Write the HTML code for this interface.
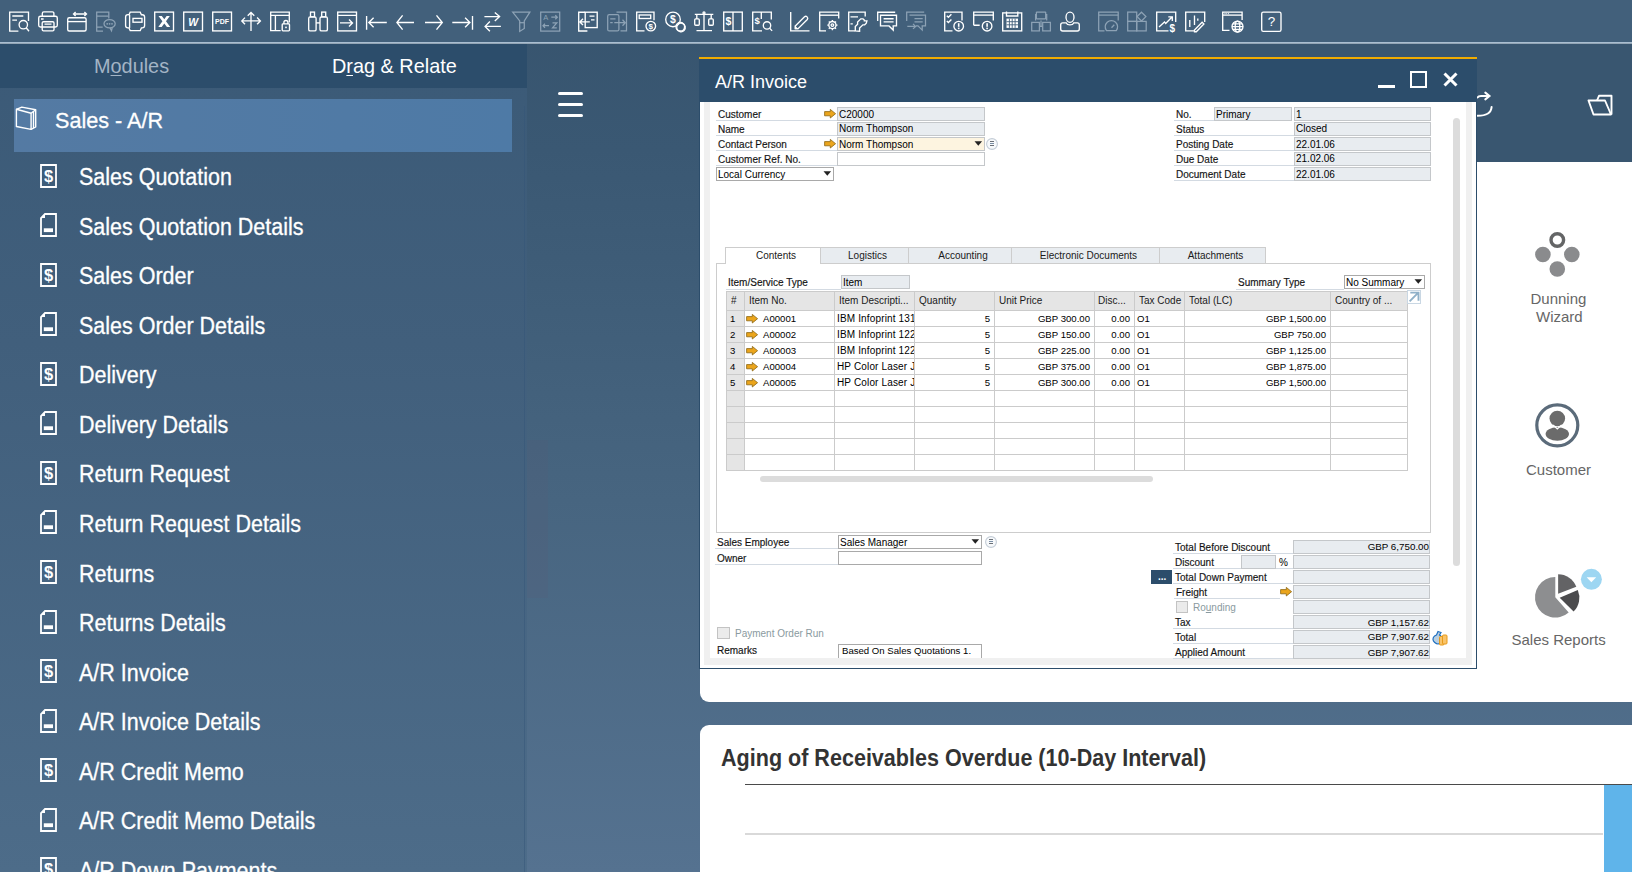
<!DOCTYPE html>
<html><head><meta charset="utf-8"><style>
html,body{margin:0;padding:0;width:1632px;height:872px;overflow:hidden;background:#3a5873}
body{position:relative;font-family:"Liberation Sans", sans-serif}
.a{position:absolute}
svg{overflow:visible}
.t{position:absolute;white-space:nowrap}
.lb{-webkit-text-stroke:0.15px #000}
.lp{-webkit-text-stroke:0.35px #fff}
</style></head><body>
<div class="a" style="left:0px;top:0px;width:1632px;height:872px;background:linear-gradient(to bottom,#37546e 0px,#3a5873 150px,#476580 500px,#557290 872px)"></div><div class="a" style="left:0px;top:0px;width:1632px;height:42px;background:#42607b"></div><div class="a" style="left:0px;top:42px;width:1632px;height:2px;background:linear-gradient(to bottom,#a9bed1 0,#a9bed1 50%,#7d8c99 100%)"></div><svg class="a" style="left:9px;top:12px;" width="21" height="21" viewBox="0 0.6 21 21"><g stroke="#fff" fill="none" stroke-width="1.35"><path d="M19.5 9.5V0.7H0.7v19h8.7"/><path d="M3.3 4.6h11M3.3 8.7h4.7"/><circle cx="14.3" cy="13.3" r="4.2"/><path d="M17.2 16.4l2.8 3.4"/></g></svg><svg class="a" style="left:38px;top:12px;" width="21" height="21" viewBox="0 0.6 21 21"><g stroke="#fff" fill="none" stroke-width="1.35"><path d="M4.3 4.8V2a1.5 1.5 0 0 1 1.5-1.5h8.6A1.5 1.5 0 0 1 15.9 2v2.8"/><rect x="0.7" y="4.8" width="18.6" height="10.8" rx="1.8"/><rect x="4.2" y="10.3" width="11.8" height="9.2" rx="1.3"/><path d="M3 7.6h2.6M6.5 12.7h7"/></g></svg><svg class="a" style="left:67px;top:12px;" width="21" height="21" viewBox="0 0.6 21 21"><g stroke="#fff" fill="none" stroke-width="1.35"><path d="M6.5 2.6h13M8.6 0.5L6.5 2.6l2.1 2.1M17.4 0.5l2.1 2.1-2.1 2.1"/><rect x="0.7" y="6.3" width="18.4" height="13.3" rx="1.5"/><path d="M0.7 10.2h18.4"/></g></svg><svg class="a" style="left:96px;top:12px;" width="21" height="21" viewBox="0 0.6 21 21"><g stroke="#8da2b5" fill="none" stroke-width="1.25"><path d="M12.8 7V0.7H0.7v19H7"/><path d="M0.7 4.6h12M0.7 15.7h6"/><ellipse cx="13.6" cy="12.4" rx="5.6" ry="4.2"/><path d="M14 16.5l1.5 2.8 0.8-3.3"/></g><g fill="#8da2b5"><circle cx="11.2" cy="12.4" r="0.9"/><circle cx="13.6" cy="12.4" r="0.9"/><circle cx="16" cy="12.4" r="0.9"/></g></svg><svg class="a" style="left:125px;top:12px;" width="21" height="21" viewBox="0 0.6 21 21"><g stroke="#fff" fill="none" stroke-width="1.35"><path d="M4 3.3L5.2 0.7h10L16.4 3.3H17.3a2.3 2.3 0 0 1 2.3 2.3v8.6a2.3 2.3 0 0 1-2.3 2.3H16.4L15.2 19.3h-10L4 16.5H2.9A2.3 2.3 0 0 1 0.6 14.2V5.6A2.3 2.3 0 0 1 2.9 3.3z"/><path d="M4.6 3.3v13.2"/><rect x="8" y="7" width="9" height="3.8"/></g></svg><svg class="a" style="left:154px;top:12px;" width="21" height="21" viewBox="0 0.6 21 21"><g stroke="#fff" fill="none" stroke-width="1.35"><rect x="0.7" y="0.7" width="18.8" height="18.8"/></g><path d="M4.5 4.5h3.3l2.5 3.4 2.3-3.4h3.2l-3.8 5.3 4.2 5.8h-3.3l-2.6-3.6-2.6 3.6H4.3l4.1-5.8z" fill="#fff"/></svg><svg class="a" style="left:183px;top:12px;" width="21" height="21" viewBox="0 0.6 21 21"><g stroke="#fff" fill="none" stroke-width="1.35"><rect x="0.7" y="0.7" width="18.8" height="18.8"/></g><text x="10.3" y="14.3" text-anchor="middle" font-family="Liberation Sans" font-weight="bold" font-style="italic" font-size="10.5" fill="#fff">W</text></svg><svg class="a" style="left:212px;top:12px;" width="21" height="21" viewBox="0 0.6 21 21"><g stroke="#fff" fill="none" stroke-width="1.35"><rect x="0.7" y="0.7" width="18.8" height="18.8"/></g><text x="10.1" y="13" text-anchor="middle" font-family="Liberation Sans" font-weight="bold" font-style="normal" font-size="7" fill="#fff">PDF</text></svg><svg class="a" style="left:241px;top:12px;" width="21" height="21" viewBox="0 0.6 21 21"><g stroke="#fff" fill="none" stroke-width="1.35"><path d="M10 1.2v18.5M0.8 9.5h18.6M6.7 4.3L10 1l3.3 3.3M4 6.2L0.8 9.5 4 12.8M16.1 6.2l3.3 3.3-3.3 3.3"/></g></svg><svg class="a" style="left:270px;top:12px;" width="21" height="21" viewBox="0 0.6 21 21"><g stroke="#fff" fill="none" stroke-width="1.35"><path d="M10.7 19.3H0.7V0.7h18.6V11"/><path d="M0.7 4h18.6M5.4 4v15.3"/><rect x="12.2" y="12.5" width="7.3" height="7" rx="0.8"/><path d="M13.9 12.5v-1.4a2 2 0 0 1 4 0v1.4"/></g><rect x="15.2" y="15.2" width="1.6" height="1.6" fill="#fff"/></svg><svg class="a" style="left:308px;top:12px;" width="21" height="21" viewBox="0 0.6 21 21"><g stroke="#fff" fill="none" stroke-width="1.35"><rect x="0.7" y="5.5" width="7.4" height="14" rx="1.5"/><rect x="12" y="5.5" width="7.4" height="14" rx="1.5"/><rect x="2.5" y="0.7" width="4" height="4.8"/><rect x="13.7" y="0.7" width="4" height="4.8"/><path d="M8.1 11.5h3.9"/></g></svg><svg class="a" style="left:337px;top:12px;" width="21" height="21" viewBox="0 0.6 21 21"><g stroke="#fff" fill="none" stroke-width="1.35"><rect x="0.7" y="0.7" width="18.8" height="18.8"/><path d="M0.7 4h18.8M3 11.5h12.5M12 8l3.5 3.5-3.5 3.5"/></g></svg><svg class="a" style="left:366px;top:12px;" width="21" height="21" viewBox="0 0.6 21 21"><g stroke="#fff" fill="none" stroke-width="1.35"><path d="M0.6 4.7v13.6M20.8 11.1H2.8M7.6 6.4L2.8 11.1l4.8 4.7"/></g></svg><svg class="a" style="left:396px;top:12px;" width="21" height="21" viewBox="0 0.6 21 21"><g stroke="#fff" fill="none" stroke-width="1.35"><path d="M18 11.1H0.9M6.6 4L0.9 11.1l5.7 7.1"/></g></svg><svg class="a" style="left:425px;top:12px;" width="21" height="21" viewBox="0 0.6 21 21"><g stroke="#fff" fill="none" stroke-width="1.35"><path d="M0 11.1h17.3M11.5 4l5.8 7.1-5.8 7.1"/></g></svg><svg class="a" style="left:453px;top:12px;" width="21" height="21" viewBox="0 0.6 21 21"><g stroke="#fff" fill="none" stroke-width="1.35"><path d="M-0.7 11.1h17.5M12.1 6.4l4.8 4.7-4.8 4.7M19.5 4.7v13.6"/></g></svg><svg class="a" style="left:483px;top:12px;" width="21" height="21" viewBox="0 0.6 21 21"><g stroke="#fff" fill="none" stroke-width="1.35"><path d="M1.4 5.2h15.2M11.8 1l4.8 4.2-4.8 4.3M17.9 15H2.1M6.9 10.1L2.1 15l4.8 4.9"/></g></svg><svg class="a" style="left:512px;top:12px;" width="21" height="21" viewBox="0 0.6 21 21"><g stroke="#8da2b5" fill="none" stroke-width="1.25"><path d="M0.7 0.7h17.2l-5.6 8.8v7.5l-4.6 3v-10.5z"/><path d="M7.7 11.3h4.6"/></g></svg><svg class="a" style="left:540px;top:12px;" width="21" height="21" viewBox="0 0.6 21 21"><g stroke="#8da2b5" fill="none" stroke-width="1.25"><rect x="0.7" y="0.7" width="19" height="19"/><path d="M11.3 5.8h6M15.3 3.8l2 2-2 2M3 14.3h6M5 12.3l-2 2 2 2M12.5 11.5h4.3l-4.3 5h4.3"/></g><text x="5.8" y="9" text-anchor="middle" font-family="Liberation Sans" font-weight="normal" font-style="normal" font-size="7.5" fill="#8da2b5">A</text></svg><svg class="a" style="left:578px;top:12px;" width="21" height="21" viewBox="0 0.6 21 21"><g stroke="#fff" fill="none" stroke-width="1.35"><path d="M7 0.8H0.7v18.8h8.7"/><rect x="7.2" y="0.8" width="12" height="15.4"/><path d="M11.5 4.7h5M13 8.5h3.5M1.8 10.5h10M5 7.3l-3.2 3.2 3.2 3.2"/></g></svg><svg class="a" style="left:607px;top:12px;" width="21" height="21" viewBox="0 0.6 21 21"><g stroke="#8da2b5" fill="none" stroke-width="1.25"><path d="M9.5 0.8h10v18.8h-6"/><rect x="0.7" y="3.3" width="11.2" height="16.3" rx="1.5"/><path d="M3.2 7.5h5.3M3.2 11.3h2.5M7.3 11.3h11M15.5 8.3l2.8 3-2.8 3"/></g></svg><svg class="a" style="left:636px;top:12px;" width="21" height="21" viewBox="0 0.6 21 21"><g stroke="#fff" fill="none" stroke-width="1.35"><path d="M8.5 19.5H0.7V0.7h17.3v8.2"/><rect x="3.2" y="3.6" width="11.5" height="3.5"/><circle cx="14.8" cy="14.7" r="4.8"/></g><text x="14.8" y="17.8" text-anchor="middle" font-family="Liberation Sans" font-weight="bold" font-style="normal" font-size="8" fill="#fff">$</text></svg><svg class="a" style="left:665px;top:12px;" width="21" height="21" viewBox="0 0.6 21 21"><g stroke="#fff" fill="none" stroke-width="1.35"><circle cx="8" cy="8" r="7.3"/><path d="M12.8 13.2a4.3 4.3 0 1 0 0.3-0.3"/><circle cx="15.3" cy="15.3" r="4.3"/></g><text x="8" y="11.8" text-anchor="middle" font-family="Liberation Sans" font-weight="bold" font-style="normal" font-size="10.5" fill="#fff">$</text></svg><svg class="a" style="left:694px;top:12px;" width="21" height="21" viewBox="0 0.6 21 21"><g stroke="#fff" fill="none" stroke-width="1.35"><path d="M10 2.5v16.5M2.5 19.2h15.5M0.8 3h18.5M2.8 3v4.5M17.2 3v4.5"/><rect x="0.7" y="7.5" width="4.6" height="6.3" rx="1"/><rect x="14.7" y="7.5" width="4.6" height="6.3" rx="1"/><circle cx="10" cy="1.5" r="1"/></g></svg><svg class="a" style="left:723px;top:12px;" width="21" height="21" viewBox="0 0.6 21 21"><g stroke="#fff" fill="none" stroke-width="1.35"><rect x="0.7" y="0.7" width="18.6" height="18.8"/><path d="M10 0.7v18.8"/></g><text x="5.5" y="14" text-anchor="middle" font-family="Liberation Sans" font-weight="bold" font-style="normal" font-size="10.5" fill="#fff">$</text></svg><svg class="a" style="left:752px;top:12px;" width="21" height="21" viewBox="0 0.6 21 21"><g stroke="#fff" fill="none" stroke-width="1.35"><path d="M10 19.5H0.7V0.7h18.6V8M9.3 0.7v7"/><circle cx="15" cy="14" r="3.7"/><path d="M17.6 16.7l2.5 2.8"/></g><text x="5.2" y="13" text-anchor="middle" font-family="Liberation Sans" font-weight="bold" font-style="normal" font-size="9.5" fill="#fff">$</text></svg><svg class="a" style="left:790px;top:12px;" width="21" height="21" viewBox="0 0.6 21 21"><g stroke="#fff" fill="none" stroke-width="1.35"><path d="M0.7 0.5v19h18.8"/><path d="M5.3 14.5L14.5 5.3a2 2 0 0 1 2.8 2.8L8.1 17.3H5.3z"/></g><path d="M4.8 14l3.8 3.8H4.8z" fill="#fff"/></svg><svg class="a" style="left:819px;top:12px;" width="21" height="21" viewBox="0 0.6 21 21"><g stroke="#fff" fill="none" stroke-width="1.35"><path d="M7 19.5H0.7V0.7h19V7"/><path d="M0.7 3.8h19"/><circle cx="13.4" cy="13.7" r="3.6"/><circle cx="13.4" cy="13.7" r="1.3"/><path d="M13.4 8.6v1.5M13.4 17.3v1.5M8.3 13.7h1.5M17 13.7h1.5M9.8 10.1l1 1M16 16.3l1 1M17 10.1l-1 1M10.8 16.3l-1 1"/></g></svg><svg class="a" style="left:848px;top:12px;" width="21" height="21" viewBox="0 0.6 21 21"><g stroke="#fff" fill="none" stroke-width="1.35"><path d="M7 19.5H0.7V0.7h16.5V5"/><path d="M2.5 5.5h7.5M2.5 12.5h2.3"/><path d="M7.3 19.5v-4.3l2.3-2.3v-2.3l3.2-3.2h2.2l1.3 1.3v0.8h2.6l-0.6 2.3-1.6 1.6h-1.8l-3.3 3.3v3.1z"/></g></svg><svg class="a" style="left:877px;top:12px;" width="21" height="21" viewBox="0 0.6 21 21"><g stroke="#fff" fill="none" stroke-width="1.35"><path d="M0.7 9.5V0.8h17.5"/><path d="M3.5 3.8h16v10.7h-3.3v4.2l-4.2-4.2H3.5z"/><path d="M6.6 7.3h10M6.6 10.4h10"/></g></svg><svg class="a" style="left:906px;top:12px;" width="21" height="21" viewBox="0 0.6 21 21"><g stroke="#8da2b5" fill="none" stroke-width="1.25"><path d="M0.7 9.5V0.8h17.5"/><path d="M3.5 3.8h16v10.7h-3.3v4.2l-4.2-4.2H10"/><path d="M8.5 7.3h8.2M8.5 10.4h8.2M1.3 15h8.3M7 12.5l2.6 2.5L7 17.5"/></g></svg><svg class="a" style="left:944px;top:12px;" width="21" height="21" viewBox="0 0.6 21 21"><g stroke="#fff" fill="none" stroke-width="1.35"><path d="M8.5 19.5H0.7V0.7h17.3v8.3"/><path d="M2.8 4.3l1.6 1.6 3-3M2.8 9.6l1.6 1.6 3-3"/><circle cx="14.7" cy="14.8" r="4.8"/></g><rect x="13.9" y="11.8" width="1.6" height="3.6" fill="#fff"/><rect x="13.9" y="16.2" width="1.6" height="1.6" fill="#fff"/></svg><svg class="a" style="left:973px;top:12px;" width="21" height="21" viewBox="0 0.6 21 21"><g stroke="#fff" fill="none" stroke-width="1.35"><path d="M0.7 13.8V0.7h19.6v8.5M0.7 13.8h6"/><path d="M0.7 3.7h19.6"/><circle cx="14.1" cy="14.8" r="4.8"/></g><rect x="13.3" y="11.8" width="1.6" height="3.6" fill="#fff"/><rect x="13.3" y="16.2" width="1.6" height="1.6" fill="#fff"/></svg><svg class="a" style="left:1002px;top:12px;" width="21" height="21" viewBox="0 0.6 21 21"><g stroke="#fff" fill="none" stroke-width="1.35"><rect x="0.7" y="1.5" width="19" height="18"/><path d="M4.5 0v4.6h11.3V0"/></g><rect x="4.5" y="7.2" width="11.5" height="9.3" fill="#fff"/><g stroke="#42607b" stroke-width="0.9"><path d="M7.4 7.2v9.3M10.2 7.2v9.3M13.1 7.2v9.3M4.5 10.3h11.5M4.5 13.4h11.5"/></g></svg><svg class="a" style="left:1031px;top:12px;" width="21" height="21" viewBox="0 0.6 21 21"><g stroke="#8da2b5" fill="none" stroke-width="1.25"><rect x="5.4" y="0.7" width="9.3" height="6.7" rx="0.5"/><path d="M4.6 9V3.2h0.8M14.7 3.2h1V9"/><rect x="0.7" y="11" width="7.7" height="8.5"/><rect x="11.7" y="11" width="7.7" height="8.5"/><path d="M8.4 15h3.3M10 9v6"/></g></svg><svg class="a" style="left:1060px;top:12px;" width="21" height="21" viewBox="0 0.6 21 21"><g stroke="#fff" fill="none" stroke-width="1.35"><ellipse cx="10" cy="5.8" rx="4" ry="5.1"/><path d="M6.3 11.5H2.7a2 2 0 0 0-2 2v4.1a2 2 0 0 0 2 2h14.6a2 2 0 0 0 2-2v-4.1a2 2 0 0 0-2-2h-3.6c-1 2.6-6.4 2.6-7.4 0z"/></g></svg><svg class="a" style="left:1098px;top:12px;" width="21" height="21" viewBox="0 0.6 21 21"><g stroke="#8da2b5" fill="none" stroke-width="1.25"><path d="M6.5 19.5H0.7V0.7h19.5v8.5"/><path d="M0.7 3.7h19.5"/><path d="M8.5 19.2a6.2 6.2 0 1 1 9.8 0z"/><path d="M13.5 16.3l2.8-3"/></g></svg><svg class="a" style="left:1127px;top:12px;" width="21" height="21" viewBox="0 0.6 21 21"><g stroke="#8da2b5" fill="none" stroke-width="1.25"><rect x="0.7" y="0.7" width="9" height="9.3"/><rect x="0.7" y="10" width="9" height="9.5"/><rect x="9.7" y="10" width="9.5" height="9.5"/><path d="M14.5 0.8l4.4 4.4-4.4 4.4-4.4-4.4z"/></g></svg><svg class="a" style="left:1156px;top:12px;" width="21" height="21" viewBox="0 0.6 21 21"><g stroke="#fff" fill="none" stroke-width="1.35"><path d="M12.5 19.5H0.7V0.7h19v10"/><path d="M3 15.5l5.5-5 1.2 1.5 5.8-5.8M12.3 5.5h4v4"/></g><text x="16.2" y="20.2" text-anchor="middle" font-family="Liberation Sans" font-weight="bold" font-style="normal" font-size="10" fill="#fff">$</text></svg><svg class="a" style="left:1185px;top:12px;" width="21" height="21" viewBox="0 0.6 21 21"><g stroke="#fff" fill="none" stroke-width="1.35"><path d="M9.5 19.5H0.7V0.7h19V10.5"/><path d="M4.8 15.5V8.5M9.5 13.5V4M12.8 9.3V7"/><path d="M9.5 18.5l7.6-7.6 1.8 1.8-7.6 7.6H9.5z"/></g></svg><svg class="a" style="left:1222px;top:12px;" width="21" height="21" viewBox="0 0.6 21 21"><g stroke="#fff" fill="none" stroke-width="1.35"><path d="M7.5 19H0.7V0.7h19.4v8"/><path d="M0.7 3.7h19.4"/><circle cx="15.5" cy="15.2" r="5.5"/><ellipse cx="15.5" cy="15.2" rx="2.3" ry="5.5"/><path d="M10 15.2h11M10.8 12.5h9.4M10.8 17.9h9.4"/></g><g fill="#fff"><circle cx="3" cy="2.2" r="0.55"/><circle cx="4.8" cy="2.2" r="0.55"/><circle cx="6.6" cy="2.2" r="0.55"/></g></svg><svg class="a" style="left:1261px;top:12px;" width="21" height="21" viewBox="0 0.6 21 21"><g stroke="#fff" fill="none" stroke-width="1.35"><rect x="0.7" y="0.7" width="19.3" height="19.3" rx="1.6"/></g><text x="10.4" y="15" text-anchor="middle" font-family="Liberation Sans" font-weight="normal" font-style="normal" font-size="13.5" fill="#fff">?</text></svg><div class="a" style="left:0px;top:44px;width:527px;height:828px;background:linear-gradient(to bottom,#3b5a77 0,#415f7c 300px,#4d6c89 828px)"></div><div class="a" style="left:0px;top:44px;width:527px;height:44px;background:#2c4d6b"></div><div class="t" style="left:94px;top:56px;font-size:20.8px;line-height:20.8px;color:#a3b4c5;font-weight:normal;transform:scaleX(0.955);transform-origin:0 0;">M<u style="text-decoration-thickness:1px;text-underline-offset:2px">o</u>dules</div><div class="t" style="left:332px;top:56px;font-size:20.8px;line-height:20.8px;color:#ffffff;font-weight:normal;transform:scaleX(0.955);transform-origin:0 0;">D<u style="text-decoration-thickness:1px;text-underline-offset:2px">r</u>ag &amp; Relate</div><div class="a" style="left:14px;top:99px;width:498px;height:53px;background:linear-gradient(to right,#547aa3,#4e7aa6)"></div><svg class="a" style="left:14px;top:104px;" width="24" height="28" viewBox="0 0 24 28"><g stroke="#fff" fill="none" stroke-width="1.4" stroke-linejoin="round"><path d="M2.4 5.3L17.1 9.2V25.4L2.4 22.5Z"/><path d="M2.4 5.3L7.8 3.1L21.7 5.8V23L17.1 25.4"/><path d="M17.1 9.2L21.7 5.8"/><path d="M19.5 7.5V24"/></g></svg><div class="t" style="left:55px;top:110px;font-size:22.5px;line-height:22.5px;color:#fff;font-weight:normal;transform:scaleX(0.96);transform-origin:0 0;-webkit-text-stroke:0.3px #fff">Sales - A/R</div><svg class="a" style="left:40px;top:164px;" width="17" height="24" viewBox="0 0 17 24"><g stroke="#fff" fill="none" stroke-width="1.8"><path d="M1 1h15v22H1z"/></g><text x="8.6" y="18.2" text-anchor="middle" font-family="Liberation Sans" font-weight="bold" font-size="16.5" fill="#fff">$</text></svg><div class="t" style="left:79px;top:166px;font-size:23px;line-height:23px;color:#fff;font-weight:normal;transform:scaleX(0.934);transform-origin:0 0;-webkit-text-stroke:0.3px #fff">Sales Quotation</div><svg class="a" style="left:40px;top:213px;" width="17" height="24" viewBox="0 0 17 24"><g stroke="#fff" fill="none" stroke-width="1.8"><path d="M5 1h11v22H1V5z"/></g><path d="M1 5l4-4v4z" fill="#fff"/><rect x="3.8" y="15.3" width="9.2" height="3.8" fill="#fff"/></svg><div class="t" style="left:79px;top:216px;font-size:23px;line-height:23px;color:#fff;font-weight:normal;transform:scaleX(0.934);transform-origin:0 0;-webkit-text-stroke:0.3px #fff">Sales Quotation Details</div><svg class="a" style="left:40px;top:263px;" width="17" height="24" viewBox="0 0 17 24"><g stroke="#fff" fill="none" stroke-width="1.8"><path d="M1 1h15v22H1z"/></g><text x="8.6" y="18.2" text-anchor="middle" font-family="Liberation Sans" font-weight="bold" font-size="16.5" fill="#fff">$</text></svg><div class="t" style="left:79px;top:265px;font-size:23px;line-height:23px;color:#fff;font-weight:normal;transform:scaleX(0.934);transform-origin:0 0;-webkit-text-stroke:0.3px #fff">Sales Order</div><svg class="a" style="left:40px;top:312px;" width="17" height="24" viewBox="0 0 17 24"><g stroke="#fff" fill="none" stroke-width="1.8"><path d="M5 1h11v22H1V5z"/></g><path d="M1 5l4-4v4z" fill="#fff"/><rect x="3.8" y="15.3" width="9.2" height="3.8" fill="#fff"/></svg><div class="t" style="left:79px;top:315px;font-size:23px;line-height:23px;color:#fff;font-weight:normal;transform:scaleX(0.934);transform-origin:0 0;-webkit-text-stroke:0.3px #fff">Sales Order Details</div><svg class="a" style="left:40px;top:362px;" width="17" height="24" viewBox="0 0 17 24"><g stroke="#fff" fill="none" stroke-width="1.8"><path d="M1 1h15v22H1z"/></g><text x="8.6" y="18.2" text-anchor="middle" font-family="Liberation Sans" font-weight="bold" font-size="16.5" fill="#fff">$</text></svg><div class="t" style="left:79px;top:364px;font-size:23px;line-height:23px;color:#fff;font-weight:normal;transform:scaleX(0.934);transform-origin:0 0;-webkit-text-stroke:0.3px #fff">Delivery</div><svg class="a" style="left:40px;top:411px;" width="17" height="24" viewBox="0 0 17 24"><g stroke="#fff" fill="none" stroke-width="1.8"><path d="M5 1h11v22H1V5z"/></g><path d="M1 5l4-4v4z" fill="#fff"/><rect x="3.8" y="15.3" width="9.2" height="3.8" fill="#fff"/></svg><div class="t" style="left:79px;top:414px;font-size:23px;line-height:23px;color:#fff;font-weight:normal;transform:scaleX(0.934);transform-origin:0 0;-webkit-text-stroke:0.3px #fff">Delivery Details</div><svg class="a" style="left:40px;top:461px;" width="17" height="24" viewBox="0 0 17 24"><g stroke="#fff" fill="none" stroke-width="1.8"><path d="M1 1h15v22H1z"/></g><text x="8.6" y="18.2" text-anchor="middle" font-family="Liberation Sans" font-weight="bold" font-size="16.5" fill="#fff">$</text></svg><div class="t" style="left:79px;top:463px;font-size:23px;line-height:23px;color:#fff;font-weight:normal;transform:scaleX(0.934);transform-origin:0 0;-webkit-text-stroke:0.3px #fff">Return Request</div><svg class="a" style="left:40px;top:510px;" width="17" height="24" viewBox="0 0 17 24"><g stroke="#fff" fill="none" stroke-width="1.8"><path d="M5 1h11v22H1V5z"/></g><path d="M1 5l4-4v4z" fill="#fff"/><rect x="3.8" y="15.3" width="9.2" height="3.8" fill="#fff"/></svg><div class="t" style="left:79px;top:513px;font-size:23px;line-height:23px;color:#fff;font-weight:normal;transform:scaleX(0.934);transform-origin:0 0;-webkit-text-stroke:0.3px #fff">Return Request Details</div><svg class="a" style="left:40px;top:560px;" width="17" height="24" viewBox="0 0 17 24"><g stroke="#fff" fill="none" stroke-width="1.8"><path d="M1 1h15v22H1z"/></g><text x="8.6" y="18.2" text-anchor="middle" font-family="Liberation Sans" font-weight="bold" font-size="16.5" fill="#fff">$</text></svg><div class="t" style="left:79px;top:563px;font-size:23px;line-height:23px;color:#fff;font-weight:normal;transform:scaleX(0.934);transform-origin:0 0;-webkit-text-stroke:0.3px #fff">Returns</div><svg class="a" style="left:40px;top:610px;" width="17" height="24" viewBox="0 0 17 24"><g stroke="#fff" fill="none" stroke-width="1.8"><path d="M5 1h11v22H1V5z"/></g><path d="M1 5l4-4v4z" fill="#fff"/><rect x="3.8" y="15.3" width="9.2" height="3.8" fill="#fff"/></svg><div class="t" style="left:79px;top:612px;font-size:23px;line-height:23px;color:#fff;font-weight:normal;transform:scaleX(0.934);transform-origin:0 0;-webkit-text-stroke:0.3px #fff">Returns Details</div><svg class="a" style="left:40px;top:659px;" width="17" height="24" viewBox="0 0 17 24"><g stroke="#fff" fill="none" stroke-width="1.8"><path d="M1 1h15v22H1z"/></g><text x="8.6" y="18.2" text-anchor="middle" font-family="Liberation Sans" font-weight="bold" font-size="16.5" fill="#fff">$</text></svg><div class="t" style="left:79px;top:662px;font-size:23px;line-height:23px;color:#fff;font-weight:normal;transform:scaleX(0.934);transform-origin:0 0;-webkit-text-stroke:0.3px #fff">A/R Invoice</div><svg class="a" style="left:40px;top:709px;" width="17" height="24" viewBox="0 0 17 24"><g stroke="#fff" fill="none" stroke-width="1.8"><path d="M5 1h11v22H1V5z"/></g><path d="M1 5l4-4v4z" fill="#fff"/><rect x="3.8" y="15.3" width="9.2" height="3.8" fill="#fff"/></svg><div class="t" style="left:79px;top:711px;font-size:23px;line-height:23px;color:#fff;font-weight:normal;transform:scaleX(0.934);transform-origin:0 0;-webkit-text-stroke:0.3px #fff">A/R Invoice Details</div><svg class="a" style="left:40px;top:758px;" width="17" height="24" viewBox="0 0 17 24"><g stroke="#fff" fill="none" stroke-width="1.8"><path d="M1 1h15v22H1z"/></g><text x="8.6" y="18.2" text-anchor="middle" font-family="Liberation Sans" font-weight="bold" font-size="16.5" fill="#fff">$</text></svg><div class="t" style="left:79px;top:761px;font-size:23px;line-height:23px;color:#fff;font-weight:normal;transform:scaleX(0.934);transform-origin:0 0;-webkit-text-stroke:0.3px #fff">A/R Credit Memo</div><svg class="a" style="left:40px;top:808px;" width="17" height="24" viewBox="0 0 17 24"><g stroke="#fff" fill="none" stroke-width="1.8"><path d="M5 1h11v22H1V5z"/></g><path d="M1 5l4-4v4z" fill="#fff"/><rect x="3.8" y="15.3" width="9.2" height="3.8" fill="#fff"/></svg><div class="t" style="left:79px;top:810px;font-size:23px;line-height:23px;color:#fff;font-weight:normal;transform:scaleX(0.934);transform-origin:0 0;-webkit-text-stroke:0.3px #fff">A/R Credit Memo Details</div><svg class="a" style="left:40px;top:857px;" width="17" height="24" viewBox="0 0 17 24"><g stroke="#fff" fill="none" stroke-width="1.8"><path d="M1 1h15v22H1z"/></g><text x="8.6" y="18.2" text-anchor="middle" font-family="Liberation Sans" font-weight="bold" font-size="16.5" fill="#fff">$</text></svg><div class="t" style="left:79px;top:860px;font-size:23px;line-height:23px;color:#fff;font-weight:normal;transform:scaleX(0.934);transform-origin:0 0;-webkit-text-stroke:0.3px #fff">A/R Down Payments</div><div class="a" style="left:524px;top:106px;width:1px;height:766px;background:rgba(50,85,120,0.45)"></div><div class="a" style="left:558px;top:92px;width:25px;height:3px;background:#fff;border-radius:1.5px"></div><div class="a" style="left:558px;top:103px;width:25px;height:3px;background:#fff;border-radius:1.5px"></div><div class="a" style="left:558px;top:114px;width:25px;height:3px;background:#fff;border-radius:1.5px"></div><div class="a" style="left:527px;top:440px;width:21px;height:158px;background:rgba(95,85,115,0.15)"></div><div class="a" style="left:700px;top:44px;width:932px;height:118px;background:#395670;border-bottom:1px solid #2f4b64"></div><div class="a" style="left:700px;top:162px;width:932px;height:540px;background:#fff;border-radius:0 0 0 9px"></div><div class="a" style="left:700px;top:725px;width:932px;height:147px;background:#fff;border-radius:9px 0 0 0"></div><div class="t" style="left:721px;top:747px;font-size:23px;line-height:23px;color:#333;font-weight:bold;transform:scaleX(0.937);transform-origin:0 0;">Aging of Receivables Overdue (10-Day Interval)</div><div class="a" style="left:745px;top:784px;width:887px;height:1px;background:#4a4a4a"></div><div class="a" style="left:745px;top:833px;width:858px;height:2px;background:#d9d9d9"></div><div class="a" style="left:1604px;top:785px;width:28px;height:87px;background:#5fb4ea"></div><svg class="a" style="left:1470px;top:88px;" width="26" height="32" viewBox="0 0 26 32"><g stroke="#fff" fill="none" stroke-width="2" stroke-linecap="round"><path d="M7.5 9.5Q8.5 8 11 8H19.5M15.3 4.6L19.5 8L15.3 11.4"/><path d="M21.6 19Q21 27.8 7.5 27.8"/></g></svg><svg class="a" style="left:1586px;top:93px;" width="28" height="24" viewBox="0 0 28 24"><g stroke="#fff" fill="none" stroke-width="1.9" stroke-linejoin="round"><path d="M11 7.5L13 2.8H25.5V21.5"/><path d="M2.5 7.5H19L25 21.5H7.5Z"/></g></svg><svg class="a" style="left:1535px;top:225px;" width="45" height="55" viewBox="0 0 45 55"><circle cx="22.3" cy="15" r="6.3" stroke="#646566" stroke-width="3.4" fill="none"/><circle cx="7.9" cy="29.5" r="7.8" fill="#8a8b8d"/><circle cx="36.8" cy="29.5" r="7.8" fill="#8a8b8d"/><circle cx="22.3" cy="44" r="7.8" fill="#8a8b8d"/></svg><div class="t" style="left:1530.5px;top:291px;font-size:15px;line-height:15px;color:#666;font-weight:normal;">Dunning</div><div class="t" style="left:1536px;top:309px;font-size:15px;line-height:15px;color:#666;font-weight:normal;">Wizard</div><svg class="a" style="left:1530px;top:398px;" width="55" height="55" viewBox="0 0 55 55"><circle cx="27.3" cy="27.3" r="20.5" stroke="#5b6b7a" stroke-width="3.2" fill="none"/><circle cx="27.3" cy="20.5" r="7.8" fill="#6b6b6b"/><ellipse cx="27.3" cy="36" rx="11.7" ry="6.8" fill="#6b6b6b"/><path d="M23 27l4.3 4 4.3-4" stroke="#fff" stroke-width="1.2" fill="none"/></svg><div class="t" style="left:1526px;top:462px;font-size:15px;line-height:15px;color:#666;font-weight:normal;">Customer</div><svg class="a" style="left:1530px;top:570px;" width="80" height="55" viewBox="0 0 80 55"><path d="M25.3 27.3L25.3 7A20.3 20.3 0 1 0 38.7 42.55Z" fill="#8d8e90"/><path d="M28.1 23.7L28.1 4.2A19.5 19.5 0 0 1 46.3 16.7Z" fill="#636365"/><path d="M29.7 27.7L47.8 20A19.7 19.7 0 0 1 43.6 41.6Z" fill="#4b4b4d"/><circle cx="61.4" cy="9.3" r="10.5" fill="#9dd6f2"/><path d="M56.6 7.3h9.6l-4.8 5z" fill="#fff"/></svg><div class="t" style="left:1511.5px;top:632px;font-size:15px;line-height:15px;color:#666;font-weight:normal;">Sales Reports</div><div class="a" style="left:699px;top:57px;width:778px;height:2px;background:#f0ab00"></div><div class="a" style="left:699px;top:59px;width:778px;height:43px;background:#2c4d6b"></div><div class="t" style="left:715px;top:73px;font-size:18px;line-height:18px;color:#fff;font-weight:normal;">A/R Invoice</div><div class="a" style="left:1378px;top:85px;width:17px;height:3px;background:#fff"></div><div class="a" style="left:1410px;top:71px;width:17px;height:17px;border:2px solid #fff;box-sizing:border-box"></div><svg class="a" style="left:1443px;top:72px;" width="15" height="15" viewBox="0 0 15 15"><path d="M1.5 1.5l12 12M13.5 1.5l-12 12" stroke="#fff" stroke-width="3"/></svg><div class="a" style="left:699px;top:102px;width:778px;height:567px;background:#fff;border:1px solid #2c4d6b;border-top:none;box-sizing:border-box"></div><div class="a" style="left:704px;top:102px;width:768px;height:563px;background:#f0f0f0"></div><div class="a" style="left:710px;top:102px;width:756px;height:556px;background:#fff"></div><div class="a" style="left:1453px;top:118px;width:7px;height:448px;background:#dcdcdc;border-radius:3.5px"></div><div class="f"><div class="t" style="left:718px;top:110px;font-size:10px;line-height:10px;color:#1a1a1a;font-weight:normal;-webkit-text-stroke:0.15px #000">Customer</div><div class="a" style="left:716px;top:120px;width:121px;height:1px;background:#d3dae2"></div><div class="a" style="left:837px;top:107px;width:148px;height:14px;background:#e8ecf0;border:1px solid #c4c7ca;box-sizing:border-box"></div><div class="t" style="left:839px;top:110px;font-size:10px;line-height:10px;color:#000;font-weight:normal;">C20000</div><svg class="a" style="left:824px;top:109px;" width="12" height="10" viewBox="0 0 12 10"><path d="M0.6 2.6H6.3V0.4L11.6 4.7L6.3 9V6.8H0.6Z" fill="#eba51c" stroke="#8a6412" stroke-width="0.8" stroke-linejoin="round"/></svg><div class="t" style="left:718px;top:125px;font-size:10px;line-height:10px;color:#1a1a1a;font-weight:normal;-webkit-text-stroke:0.15px #000">Name</div><div class="a" style="left:716px;top:135px;width:121px;height:1px;background:#d3dae2"></div><div class="a" style="left:837px;top:122px;width:148px;height:14px;background:#e8ecf0;border:1px solid #c4c7ca;box-sizing:border-box"></div><div class="t" style="left:839px;top:124px;font-size:10px;line-height:10px;color:#000;font-weight:normal;">Norm Thompson</div><div class="t" style="left:718px;top:140px;font-size:10px;line-height:10px;color:#1a1a1a;font-weight:normal;-webkit-text-stroke:0.15px #000">Contact Person</div><div class="a" style="left:716px;top:150px;width:121px;height:1px;background:#d3dae2"></div><div class="a" style="left:837px;top:137px;width:148px;height:14px;background:#fdf4e0;border:1px solid #c4c7ca;box-sizing:border-box"></div><div class="t" style="left:839px;top:140px;font-size:10px;line-height:10px;color:#000;font-weight:normal;">Norm Thompson</div><svg class="a" style="left:974px;top:141px;" width="9" height="6" viewBox="0 0 9 6"><path d="M0.5 0.3h7.6l-3.8 4.4z" fill="#222"/></svg><svg class="a" style="left:824px;top:139px;" width="12" height="10" viewBox="0 0 12 10"><path d="M0.6 2.6H6.3V0.4L11.6 4.7L6.3 9V6.8H0.6Z" fill="#eba51c" stroke="#8a6412" stroke-width="0.8" stroke-linejoin="round"/></svg><div class="t" style="left:718px;top:155px;font-size:10px;line-height:10px;color:#1a1a1a;font-weight:normal;-webkit-text-stroke:0.15px #000">Customer Ref. No.</div><div class="a" style="left:716px;top:165px;width:121px;height:1px;background:#d3dae2"></div><div class="a" style="left:837px;top:152px;width:148px;height:14px;background:#ffffff;border:1px solid #c4c7ca;box-sizing:border-box"></div><svg class="a" style="left:986px;top:138px;" width="13" height="13" viewBox="0 0 13 13"><circle cx="6" cy="6" r="5.4" fill="#f7f9fb" stroke="#c3ccd6" stroke-width="1.1"/><g fill="#6a6f76" shape-rendering="crispEdges"><rect x="4" y="3" width="4" height="1"/><rect x="4" y="5" width="4" height="1" fill="#7a8fa6"/><rect x="4" y="7" width="4" height="1"/></g></svg><div class="a" style="left:716px;top:167px;width:118px;height:14px;background:#fff;border:1px solid #a9a9a9;box-sizing:border-box"></div><div class="t" style="left:718px;top:170px;font-size:10px;line-height:10px;color:#000;font-weight:normal;">Local Currency</div><svg class="a" style="left:823px;top:171px;" width="9" height="6" viewBox="0 0 9 6"><path d="M0.5 0.3h7.6l-3.8 4.4z" fill="#222"/></svg><div class="t" style="left:1176px;top:110px;font-size:10px;line-height:10px;color:#1a1a1a;font-weight:normal;-webkit-text-stroke:0.15px #000">No.</div><div class="a" style="left:1174px;top:120px;width:40px;height:1px;background:#d3dae2"></div><div class="a" style="left:1214px;top:107px;width:78px;height:14px;background:#e8ecf0;border:1px solid #c4c7ca;box-sizing:border-box"></div><div class="t" style="left:1216px;top:110px;font-size:10px;line-height:10px;color:#000;font-weight:normal;">Primary</div><div class="a" style="left:1294px;top:107px;width:137px;height:14px;background:#e8ecf0;border:1px solid #c4c7ca;box-sizing:border-box"></div><div class="t" style="left:1296px;top:110px;font-size:10px;line-height:10px;color:#000;font-weight:normal;">1</div><div class="t" style="left:1176px;top:125px;font-size:10px;line-height:10px;color:#1a1a1a;font-weight:normal;-webkit-text-stroke:0.15px #000">Status</div><div class="a" style="left:1174px;top:135px;width:120px;height:1px;background:#d3dae2"></div><div class="a" style="left:1294px;top:122px;width:137px;height:14px;background:#e8ecf0;border:1px solid #c4c7ca;box-sizing:border-box"></div><div class="t" style="left:1296px;top:124px;font-size:10px;line-height:10px;color:#000;font-weight:normal;">Closed</div><div class="t" style="left:1176px;top:140px;font-size:10px;line-height:10px;color:#1a1a1a;font-weight:normal;-webkit-text-stroke:0.15px #000">Posting Date</div><div class="a" style="left:1174px;top:150px;width:120px;height:1px;background:#d3dae2"></div><div class="a" style="left:1294px;top:137px;width:137px;height:14px;background:#e8ecf0;border:1px solid #c4c7ca;box-sizing:border-box"></div><div class="t" style="left:1296px;top:140px;font-size:10px;line-height:10px;color:#000;font-weight:normal;">22.01.06</div><div class="t" style="left:1176px;top:155px;font-size:10px;line-height:10px;color:#1a1a1a;font-weight:normal;-webkit-text-stroke:0.15px #000">Due Date</div><div class="a" style="left:1174px;top:165px;width:120px;height:1px;background:#d3dae2"></div><div class="a" style="left:1294px;top:152px;width:137px;height:14px;background:#e8ecf0;border:1px solid #c4c7ca;box-sizing:border-box"></div><div class="t" style="left:1296px;top:154px;font-size:10px;line-height:10px;color:#000;font-weight:normal;">21.02.06</div><div class="t" style="left:1176px;top:170px;font-size:10px;line-height:10px;color:#1a1a1a;font-weight:normal;-webkit-text-stroke:0.15px #000">Document Date</div><div class="a" style="left:1174px;top:180px;width:120px;height:1px;background:#d3dae2"></div><div class="a" style="left:1294px;top:167px;width:137px;height:14px;background:#e8ecf0;border:1px solid #c4c7ca;box-sizing:border-box"></div><div class="t" style="left:1296px;top:170px;font-size:10px;line-height:10px;color:#000;font-weight:normal;">22.01.06</div><div class="a" style="left:716px;top:263px;width:715px;height:270px;border:1px solid #cdcdcd;box-sizing:border-box;background:#fff"></div><div class="a" style="left:725px;top:247px;width:96px;height:17px;background:#fff;border:1px solid #cdcdcd;border-bottom:none;box-sizing:border-box"></div><div class="t" style="left:728.5px;width:95px;top:251px;font-size:10px;line-height:10px;text-align:center;color:#1a1a1a">Contents</div><div class="a" style="left:820px;top:247px;width:89px;height:17px;background:#e8ecf0;border:1px solid #cdcdcd;box-sizing:border-box"></div><div class="t" style="left:823.5px;width:88px;top:251px;font-size:10px;line-height:10px;text-align:center;color:#1a1a1a">Logistics</div><div class="a" style="left:908px;top:247px;width:104px;height:17px;background:#e8ecf0;border:1px solid #cdcdcd;box-sizing:border-box"></div><div class="t" style="left:911.5px;width:103px;top:251px;font-size:10px;line-height:10px;text-align:center;color:#1a1a1a">Accounting</div><div class="a" style="left:1011px;top:247px;width:149px;height:17px;background:#e8ecf0;border:1px solid #cdcdcd;box-sizing:border-box"></div><div class="t" style="left:1014.5px;width:148px;top:251px;font-size:10px;line-height:10px;text-align:center;color:#1a1a1a">Electronic Documents</div><div class="a" style="left:1159px;top:247px;width:107px;height:17px;background:#e8ecf0;border:1px solid #cdcdcd;box-sizing:border-box"></div><div class="t" style="left:1162.5px;width:106px;top:251px;font-size:10px;line-height:10px;text-align:center;color:#1a1a1a">Attachments</div><div class="t" style="left:728px;top:278px;font-size:10px;line-height:10px;color:#1a1a1a;font-weight:normal;-webkit-text-stroke:0.15px #000">Item/Service Type</div><div class="a" style="left:726px;top:288.5px;width:115px;height:1px;background:#d3dae2"></div><div class="a" style="left:841px;top:275px;width:69px;height:14px;background:#e8ecf0;border:1px solid #c4c7ca;box-sizing:border-box"></div><div class="t" style="left:843px;top:278px;font-size:10px;line-height:10px;color:#000;font-weight:normal;">Item</div><div class="t" style="left:1238px;top:278px;font-size:10px;line-height:10px;color:#1a1a1a;font-weight:normal;-webkit-text-stroke:0.15px #000">Summary Type</div><div class="a" style="left:1236px;top:288.5px;width:108px;height:1px;background:#d3dae2"></div><div class="a" style="left:1344px;top:275px;width:81px;height:14px;background:#fff;border:1px solid #a9a9a9;box-sizing:border-box"></div><div class="t" style="left:1346px;top:278px;font-size:10px;line-height:10px;color:#000;font-weight:normal;">No Summary</div><svg class="a" style="left:1414px;top:279px;" width="9" height="6" viewBox="0 0 9 6"><path d="M0.5 0.3h7.6l-3.8 4.4z" fill="#222"/></svg><div class="a" style="left:726px;top:291px;width:682px;height:180px;background:#fff;border:1px solid #cbcbcb;box-sizing:border-box"></div><div class="a" style="left:726px;top:291px;width:682px;height:20px;background:#e5e5e5"></div><div class="a" style="left:726px;top:291px;width:18px;height:180px;background:#e5e5e5"></div><div class="a" style="left:726px;top:310px;width:682px;height:1px;background:#cbcbcb"></div><div class="a" style="left:726px;top:326px;width:682px;height:1px;background:#cbcbcb"></div><div class="a" style="left:726px;top:342px;width:682px;height:1px;background:#cbcbcb"></div><div class="a" style="left:726px;top:358px;width:682px;height:1px;background:#cbcbcb"></div><div class="a" style="left:726px;top:374px;width:682px;height:1px;background:#cbcbcb"></div><div class="a" style="left:726px;top:390px;width:682px;height:1px;background:#cbcbcb"></div><div class="a" style="left:726px;top:406px;width:682px;height:1px;background:#cbcbcb"></div><div class="a" style="left:726px;top:422px;width:682px;height:1px;background:#cbcbcb"></div><div class="a" style="left:726px;top:438px;width:682px;height:1px;background:#cbcbcb"></div><div class="a" style="left:726px;top:454px;width:682px;height:1px;background:#cbcbcb"></div><div class="a" style="left:726px;top:470px;width:682px;height:1px;background:#cbcbcb"></div><div class="a" style="left:726px;top:291px;width:682px;height:1px;background:#cbcbcb"></div><div class="a" style="left:726px;top:470px;width:682px;height:1px;background:#cbcbcb"></div><div class="a" style="left:726px;top:291px;width:1px;height:180px;background:#cbcbcb"></div><div class="a" style="left:744px;top:291px;width:1px;height:180px;background:#cbcbcb"></div><div class="a" style="left:834px;top:291px;width:1px;height:180px;background:#cbcbcb"></div><div class="a" style="left:914px;top:291px;width:1px;height:180px;background:#cbcbcb"></div><div class="a" style="left:994px;top:291px;width:1px;height:180px;background:#cbcbcb"></div><div class="a" style="left:1094px;top:291px;width:1px;height:180px;background:#cbcbcb"></div><div class="a" style="left:1134px;top:291px;width:1px;height:180px;background:#cbcbcb"></div><div class="a" style="left:1184px;top:291px;width:1px;height:180px;background:#cbcbcb"></div><div class="a" style="left:1330px;top:291px;width:1px;height:180px;background:#cbcbcb"></div><div class="a" style="left:1407px;top:291px;width:1px;height:180px;background:#cbcbcb"></div><div class="t" style="left:731px;top:295px;width:12px;overflow:hidden;font-size:10px;line-height:12px;height:12px;color:#1a1a1a">#</div><div class="t" style="left:749px;top:295px;width:84px;overflow:hidden;font-size:10px;line-height:12px;height:12px;color:#1a1a1a">Item No.</div><div class="t" style="left:839px;top:295px;width:74px;overflow:hidden;font-size:10px;line-height:12px;height:12px;color:#1a1a1a">Item Descripti...</div><div class="t" style="left:919px;top:295px;width:74px;overflow:hidden;font-size:10px;line-height:12px;height:12px;color:#1a1a1a">Quantity</div><div class="t" style="left:999px;top:295px;width:94px;overflow:hidden;font-size:10px;line-height:12px;height:12px;color:#1a1a1a">Unit Price</div><div class="t" style="left:1098px;top:295px;width:35px;overflow:hidden;font-size:10px;line-height:12px;height:12px;color:#1a1a1a">Disc...</div><div class="t" style="left:1139px;top:295px;width:44px;overflow:hidden;font-size:10px;line-height:12px;height:12px;color:#1a1a1a">Tax Code</div><div class="t" style="left:1189px;top:295px;width:140px;overflow:hidden;font-size:10px;line-height:12px;height:12px;color:#1a1a1a">Total (LC)</div><div class="t" style="left:1335px;top:295px;width:71px;overflow:hidden;font-size:10px;line-height:12px;height:12px;color:#1a1a1a">Country of ...</div><div class="t" style="left:730px;top:314px;font-size:9.6px;line-height:9.6px;color:#000;font-weight:normal;">1</div><svg class="a" style="left:746px;top:314px;" width="12" height="10" viewBox="0 0 12 10"><path d="M0.6 2.6H6.3V0.4L11.6 4.7L6.3 9V6.8H0.6Z" fill="#eba51c" stroke="#8a6412" stroke-width="0.8" stroke-linejoin="round"/></svg><div class="t" style="left:763px;top:314px;font-size:9.6px;line-height:9.6px;color:#000;font-weight:normal;">A00001</div><div class="t" style="left:837px;top:314px;width:77px;overflow:hidden;font-size:10px;line-height:10px;height:12px;letter-spacing:0.15px">IBM Infoprint 1312</div><div class="t" style="right:642px;top:314px;font-size:9.6px;line-height:9.6px;color:#000;font-weight:normal;text-align:right;">5</div><div class="t" style="right:542px;top:314px;font-size:9.6px;line-height:9.6px;color:#000;font-weight:normal;text-align:right;">GBP 300.00</div><div class="t" style="right:502px;top:314px;font-size:9.6px;line-height:9.6px;color:#000;font-weight:normal;text-align:right;">0.00</div><div class="t" style="left:1137px;top:314px;font-size:9.6px;line-height:9.6px;color:#000;font-weight:normal;">O1</div><div class="t" style="right:306px;top:314px;font-size:9.6px;line-height:9.6px;color:#000;font-weight:normal;text-align:right;">GBP 1,500.00</div><div class="t" style="left:730px;top:330px;font-size:9.6px;line-height:9.6px;color:#000;font-weight:normal;">2</div><svg class="a" style="left:746px;top:330px;" width="12" height="10" viewBox="0 0 12 10"><path d="M0.6 2.6H6.3V0.4L11.6 4.7L6.3 9V6.8H0.6Z" fill="#eba51c" stroke="#8a6412" stroke-width="0.8" stroke-linejoin="round"/></svg><div class="t" style="left:763px;top:330px;font-size:9.6px;line-height:9.6px;color:#000;font-weight:normal;">A00002</div><div class="t" style="left:837px;top:330px;width:77px;overflow:hidden;font-size:10px;line-height:10px;height:12px;letter-spacing:0.15px">IBM Infoprint 1222</div><div class="t" style="right:642px;top:330px;font-size:9.6px;line-height:9.6px;color:#000;font-weight:normal;text-align:right;">5</div><div class="t" style="right:542px;top:330px;font-size:9.6px;line-height:9.6px;color:#000;font-weight:normal;text-align:right;">GBP 150.00</div><div class="t" style="right:502px;top:330px;font-size:9.6px;line-height:9.6px;color:#000;font-weight:normal;text-align:right;">0.00</div><div class="t" style="left:1137px;top:330px;font-size:9.6px;line-height:9.6px;color:#000;font-weight:normal;">O1</div><div class="t" style="right:306px;top:330px;font-size:9.6px;line-height:9.6px;color:#000;font-weight:normal;text-align:right;">GBP 750.00</div><div class="t" style="left:730px;top:346px;font-size:9.6px;line-height:9.6px;color:#000;font-weight:normal;">3</div><svg class="a" style="left:746px;top:346px;" width="12" height="10" viewBox="0 0 12 10"><path d="M0.6 2.6H6.3V0.4L11.6 4.7L6.3 9V6.8H0.6Z" fill="#eba51c" stroke="#8a6412" stroke-width="0.8" stroke-linejoin="round"/></svg><div class="t" style="left:763px;top:346px;font-size:9.6px;line-height:9.6px;color:#000;font-weight:normal;">A00003</div><div class="t" style="left:837px;top:346px;width:77px;overflow:hidden;font-size:10px;line-height:10px;height:12px;letter-spacing:0.15px">IBM Infoprint 1226</div><div class="t" style="right:642px;top:346px;font-size:9.6px;line-height:9.6px;color:#000;font-weight:normal;text-align:right;">5</div><div class="t" style="right:542px;top:346px;font-size:9.6px;line-height:9.6px;color:#000;font-weight:normal;text-align:right;">GBP 225.00</div><div class="t" style="right:502px;top:346px;font-size:9.6px;line-height:9.6px;color:#000;font-weight:normal;text-align:right;">0.00</div><div class="t" style="left:1137px;top:346px;font-size:9.6px;line-height:9.6px;color:#000;font-weight:normal;">O1</div><div class="t" style="right:306px;top:346px;font-size:9.6px;line-height:9.6px;color:#000;font-weight:normal;text-align:right;">GBP 1,125.00</div><div class="t" style="left:730px;top:362px;font-size:9.6px;line-height:9.6px;color:#000;font-weight:normal;">4</div><svg class="a" style="left:746px;top:362px;" width="12" height="10" viewBox="0 0 12 10"><path d="M0.6 2.6H6.3V0.4L11.6 4.7L6.3 9V6.8H0.6Z" fill="#eba51c" stroke="#8a6412" stroke-width="0.8" stroke-linejoin="round"/></svg><div class="t" style="left:763px;top:362px;font-size:9.6px;line-height:9.6px;color:#000;font-weight:normal;">A00004</div><div class="t" style="left:837px;top:362px;width:77px;overflow:hidden;font-size:10px;line-height:10px;height:12px;letter-spacing:0.15px">HP Color Laser Jet</div><div class="t" style="right:642px;top:362px;font-size:9.6px;line-height:9.6px;color:#000;font-weight:normal;text-align:right;">5</div><div class="t" style="right:542px;top:362px;font-size:9.6px;line-height:9.6px;color:#000;font-weight:normal;text-align:right;">GBP 375.00</div><div class="t" style="right:502px;top:362px;font-size:9.6px;line-height:9.6px;color:#000;font-weight:normal;text-align:right;">0.00</div><div class="t" style="left:1137px;top:362px;font-size:9.6px;line-height:9.6px;color:#000;font-weight:normal;">O1</div><div class="t" style="right:306px;top:362px;font-size:9.6px;line-height:9.6px;color:#000;font-weight:normal;text-align:right;">GBP 1,875.00</div><div class="t" style="left:730px;top:378px;font-size:9.6px;line-height:9.6px;color:#000;font-weight:normal;">5</div><svg class="a" style="left:746px;top:378px;" width="12" height="10" viewBox="0 0 12 10"><path d="M0.6 2.6H6.3V0.4L11.6 4.7L6.3 9V6.8H0.6Z" fill="#eba51c" stroke="#8a6412" stroke-width="0.8" stroke-linejoin="round"/></svg><div class="t" style="left:763px;top:378px;font-size:9.6px;line-height:9.6px;color:#000;font-weight:normal;">A00005</div><div class="t" style="left:837px;top:378px;width:77px;overflow:hidden;font-size:10px;line-height:10px;height:12px;letter-spacing:0.15px">HP Color Laser Jet</div><div class="t" style="right:642px;top:378px;font-size:9.6px;line-height:9.6px;color:#000;font-weight:normal;text-align:right;">5</div><div class="t" style="right:542px;top:378px;font-size:9.6px;line-height:9.6px;color:#000;font-weight:normal;text-align:right;">GBP 300.00</div><div class="t" style="right:502px;top:378px;font-size:9.6px;line-height:9.6px;color:#000;font-weight:normal;text-align:right;">0.00</div><div class="t" style="left:1137px;top:378px;font-size:9.6px;line-height:9.6px;color:#000;font-weight:normal;">O1</div><div class="t" style="right:306px;top:378px;font-size:9.6px;line-height:9.6px;color:#000;font-weight:normal;text-align:right;">GBP 1,500.00</div><svg class="a" style="left:1407px;top:290px;" width="14" height="14" viewBox="0 0 14 14"><rect x="0.5" y="0.5" width="13" height="13" fill="#fff" stroke="#c9d7e3"/><path d="M2.6 11.4L11.3 2.7M3.3 2.6H11.5V10.8" stroke="#8fb0c8" stroke-width="1.9" fill="none"/></svg><div class="a" style="left:760px;top:476px;width:393px;height:6px;background:#dcdcdc;border-radius:3px"></div><div class="t" style="left:717px;top:538px;font-size:10px;line-height:10px;color:#1a1a1a;font-weight:normal;-webkit-text-stroke:0.15px #000">Sales Employee</div><div class="a" style="left:715px;top:548px;width:123px;height:1px;background:#d3dae2"></div><div class="a" style="left:838px;top:535px;width:144px;height:14px;background:#fff;border:1px solid #a9a9a9;box-sizing:border-box"></div><div class="t" style="left:840px;top:538px;font-size:10px;line-height:10px;color:#000;font-weight:normal;">Sales Manager</div><svg class="a" style="left:971px;top:539px;" width="9" height="6" viewBox="0 0 9 6"><path d="M0.5 0.3h7.6l-3.8 4.4z" fill="#222"/></svg><svg class="a" style="left:985px;top:536px;" width="13" height="13" viewBox="0 0 13 13"><circle cx="6" cy="6" r="5.4" fill="#f7f9fb" stroke="#c3ccd6" stroke-width="1.1"/><g fill="#6a6f76" shape-rendering="crispEdges"><rect x="4" y="3" width="4" height="1"/><rect x="4" y="5" width="4" height="1" fill="#7a8fa6"/><rect x="4" y="7" width="4" height="1"/></g></svg><div class="t" style="left:717px;top:554px;font-size:10px;line-height:10px;color:#1a1a1a;font-weight:normal;-webkit-text-stroke:0.15px #000">Owner</div><div class="a" style="left:715px;top:564px;width:123px;height:1px;background:#d3dae2"></div><div class="a" style="left:838px;top:551px;width:144px;height:14px;background:#fff;border:1px solid #a9a9a9;box-sizing:border-box"></div><div class="a" style="left:717px;top:627px;width:13px;height:12px;background:#ebebeb;border:1px solid #c3c3c3;box-sizing:border-box"></div><div class="t" style="left:735px;top:629px;font-size:10px;line-height:10px;color:#8a9aa0;font-weight:normal;">Payment Order Run</div><div class="t" style="left:717px;top:646px;font-size:10px;line-height:10px;color:#1a1a1a;font-weight:normal;-webkit-text-stroke:0.15px #000">Remarks</div><div class="a" style="left:838px;top:644px;width:144px;height:14px;background:#fff;border:1px solid #a9a9a9;border-bottom:none;box-sizing:border-box"></div><div class="t" style="left:842px;top:646px;font-size:9.6px;line-height:9.6px;color:#000;font-weight:normal;">Based On Sales Quotations 1.</div><div class="t" style="left:1175px;top:543px;font-size:10px;line-height:10px;color:#1a1a1a;font-weight:normal;-webkit-text-stroke:0.15px #000">Total Before Discount</div><div class="a" style="left:1173px;top:553px;width:120px;height:1px;background:#d3dae2"></div><div class="a" style="left:1293px;top:540px;width:137px;height:14px;background:#e8ecf0;border:1px solid #c4c7ca;box-sizing:border-box"></div><div class="t" style="right:203px;top:542px;font-size:9.8px;line-height:9.8px;color:#000;font-weight:normal;text-align:right;">GBP 6,750.00</div><div class="t" style="left:1175px;top:558px;font-size:10px;line-height:10px;color:#1a1a1a;font-weight:normal;-webkit-text-stroke:0.15px #000">Discount</div><div class="a" style="left:1173px;top:568px;width:120px;height:1px;background:#d3dae2"></div><div class="a" style="left:1293px;top:555px;width:137px;height:14px;background:#e8ecf0;border:1px solid #c4c7ca;box-sizing:border-box"></div><div class="t" style="left:1175px;top:573px;font-size:10px;line-height:10px;color:#1a1a1a;font-weight:normal;-webkit-text-stroke:0.15px #000">Total Down Payment</div><div class="a" style="left:1173px;top:583px;width:120px;height:1px;background:#d3dae2"></div><div class="a" style="left:1293px;top:570px;width:137px;height:14px;background:#e8ecf0;border:1px solid #c4c7ca;box-sizing:border-box"></div><div class="t" style="left:1176px;top:588px;font-size:10px;line-height:10px;color:#1a1a1a;font-weight:normal;-webkit-text-stroke:0.15px #000">Freight</div><div class="a" style="left:1174px;top:598px;width:106px;height:1px;background:#d3dae2"></div><svg class="a" style="left:1280px;top:587px;" width="12" height="10" viewBox="0 0 12 10"><path d="M0.6 2.6H6.3V0.4L11.6 4.7L6.3 9V6.8H0.6Z" fill="#eba51c" stroke="#8a6412" stroke-width="0.8" stroke-linejoin="round"/></svg><div class="a" style="left:1293px;top:585px;width:137px;height:14px;background:#e8ecf0;border:1px solid #c4c7ca;box-sizing:border-box"></div><div class="a" style="left:1176px;top:601px;width:12px;height:12px;background:#ebebeb;border:1px solid #c3c3c3;box-sizing:border-box"></div><div class="t" style="left:1193px;top:603px;font-size:10px;line-height:10px;color:#8a9aa0;font-weight:normal;">Ro<u>u</u>nding</div><div class="a" style="left:1293px;top:600px;width:137px;height:14px;background:#e8ecf0;border:1px solid #c4c7ca;box-sizing:border-box"></div><div class="t" style="left:1175px;top:618px;font-size:10px;line-height:10px;color:#1a1a1a;font-weight:normal;-webkit-text-stroke:0.15px #000">Tax</div><div class="a" style="left:1173px;top:628px;width:120px;height:1px;background:#d3dae2"></div><div class="a" style="left:1293px;top:615px;width:137px;height:14px;background:#e8ecf0;border:1px solid #c4c7ca;box-sizing:border-box"></div><div class="t" style="right:203px;top:618px;font-size:9.8px;line-height:9.8px;color:#000;font-weight:normal;text-align:right;">GBP 1,157.62</div><div class="t" style="left:1175px;top:633px;font-size:10px;line-height:10px;color:#1a1a1a;font-weight:normal;-webkit-text-stroke:0.15px #000">Total</div><div class="a" style="left:1173px;top:643px;width:120px;height:1px;background:#d3dae2"></div><div class="a" style="left:1293px;top:630px;width:137px;height:14px;background:#e8ecf0;border:1px solid #c4c7ca;box-sizing:border-box"></div><div class="t" style="right:203px;top:632px;font-size:9.8px;line-height:9.8px;color:#000;font-weight:normal;text-align:right;">GBP 7,907.62</div><div class="t" style="left:1175px;top:648px;font-size:10px;line-height:10px;color:#1a1a1a;font-weight:normal;-webkit-text-stroke:0.15px #000">Applied Amount</div><div class="a" style="left:1173px;top:658px;width:120px;height:1px;background:#d3dae2"></div><div class="a" style="left:1293px;top:645px;width:137px;height:14px;background:#e8ecf0;border:1px solid #c4c7ca;box-sizing:border-box"></div><div class="t" style="right:203px;top:648px;font-size:9.8px;line-height:9.8px;color:#000;font-weight:normal;text-align:right;">GBP 7,907.62</div><div class="a" style="left:1241px;top:555px;width:35px;height:14px;background:#e8ecf0;border:1px solid #c4c7ca;box-sizing:border-box"></div><div class="t" style="left:1279px;top:558px;font-size:10px;line-height:10px;color:#000;font-weight:normal;">%</div><div class="a" style="left:1151px;top:570px;width:21px;height:14px;background:#2c4d6b"></div><div class="t" style="left:1158px;top:572px;font-size:10px;line-height:10px;color:#fff;font-weight:bold;">...</div><svg class="a" style="left:1432px;top:630px;" width="16" height="16" viewBox="0 0 16 16"><path d="M6 1.5l3 1-1.5 2.5c2 1 2.5 3 2.5 4.5 0 2.5-2 4.5-4 4.5S1 11.5 1 9.5C1 7 3 5.5 4.5 5z" fill="#b9cfe0" stroke="#1e6fc0" stroke-width="1.2"/><rect x="7.5" y="6.5" width="4.5" height="8.5" rx="1" fill="#f9c46a" stroke="#e79a1a"/><rect x="10.5" y="5" width="4.5" height="9" rx="1" fill="#f9c46a" stroke="#e79a1a"/></svg></div>
</body></html>
